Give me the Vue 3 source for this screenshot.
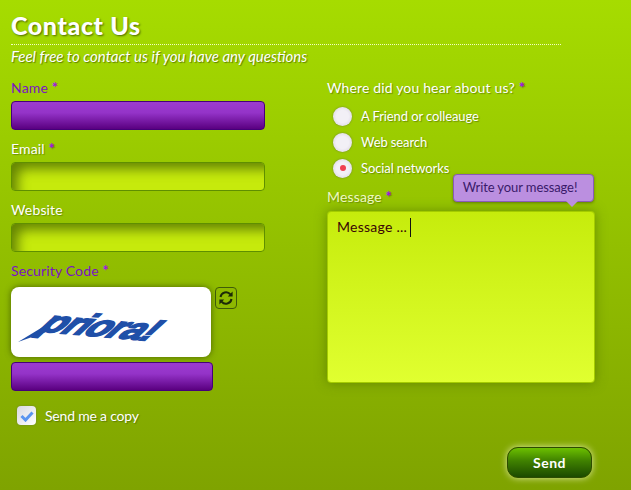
<script setup>
const sources = [
  { label: 'A Friend or colleauge', checked: false },
  { label: 'Web search', checked: false },
  { label: 'Social networks', checked: true },
]
</script>

<template>
  <div class="page">
    <h1 class="title">Contact Us</h1>
    <p class="intro">Feel free to contact us if you have any questions</p>

    <div class="columns">
      <div class="col-left">
        <div class="label label--error">Name <span class="req">*</span></div>
        <div class="field field--error"></div>

        <div class="label">Email <span class="req">*</span></div>
        <div class="field"></div>

        <div class="label">Website</div>
        <div class="field"></div>

        <div class="label label--error">Security Code <span class="req">*</span></div>
        <div class="captcha-row">
          <div class="captcha">
            <svg width="200" height="70" viewBox="0 0 200 70">
              <path d="M7 55 L40 35 L38 44 Z" fill="#1f4fa8" />
              <text class="captcha-text" transform="translate(25 44) rotate(5) skewX(-42) scale(1.42 1.15)">priora!</text>
            </svg>
          </div>
          <div class="refresh">
            <svg width="16" height="16" viewBox="0 0 16 16" fill="none" stroke="#1c2a08" stroke-width="2">
              <path d="M2.5 7 A5.6 5.6 0 0 1 12.4 4.4" />
              <path d="M13.5 9 A5.6 5.6 0 0 1 3.6 11.6" />
              <path d="M14.6 1.6 V6.4 H9.8 Z" fill="#1c2a08" stroke="none" />
              <path d="M1.4 14.4 V9.6 H6.2 Z" fill="#1c2a08" stroke="none" />
            </svg>
          </div>
        </div>
        <div class="field field--error field--code"></div>

        <div class="copy">
          <span class="checkbox">
            <svg width="14" height="12" viewBox="0 0 14 12">
              <path d="M1.5 6 L5.5 10 L12.5 2.5" fill="none" stroke="#5a94f0" stroke-width="3" />
            </svg>
          </span>
          <span class="copy-text">Send me a copy</span>
        </div>
      </div>

      <div class="col-right">
        <div class="label">Where did you hear about us? <span class="req">*</span></div>
        <div class="radios">
          <div v-for="item in sources" :key="item.label" class="radio-row">
            <span class="radio"><span v-if="item.checked" class="radio-dot"></span></span>
            <span class="radio-text">{{ item.label }}</span>
          </div>
        </div>

        <div class="message-wrap">
          <div class="label label--message">Message <span class="req">*</span></div>
          <div class="tip">Write your message!</div>
          <div class="message">Message ...<span class="caret"></span></div>
        </div>
      </div>
    </div>

    <div class="actions">
      <button type="button" class="send">Send</button>
    </div>
  </div>
</template>

<style>
html, body { margin: 0; padding: 0; }
</style>

<style scoped>
.page {
  width: 631px;
  height: 490px;
  box-sizing: border-box;
  padding: 11px 0 0 11px;
  overflow: hidden;
  background: linear-gradient(180deg, #a6dc00 0%, #7fa300 100%);
  font-family: "Lato", "Open Sans", sans-serif;
  color: #fff;
}
.title {
  width: 550px;
  height: 34px;
  margin: 0;
  box-sizing: border-box;
  border-bottom: 1px dotted #f2ffc0;
  font-size: 25px;
  line-height: 28px;
  font-weight: 900;
  letter-spacing: 0.6px;
  text-shadow: 1px 1px 2px #4d6a00;
}
.intro {
  height: 22px;
  margin: 0;
  font-size: 15px;
  line-height: 22px;
  font-style: italic;
  text-shadow: 1px 1px 1px #5e7f00;
}
.columns {
  display: flex;
  margin-top: 12px;
}
.col-left { width: 316px; }
.col-right { width: 268px; }
.label {
  height: 19px;
  margin-bottom: 3px;
  font-size: 14px;
  line-height: 17px;
  letter-spacing: 0.15px;
  text-shadow: 1px 1px 1px #6d9000;
}
.label--error {
  color: #7a12c4;
  text-shadow: none;
}
.label--message {
  margin-bottom: 4px;
  color: #eef8c0;
}
.req {
  color: #a010e8;
  font-size: 15px;
  font-weight: 700;
}
.field {
  width: 254px;
  height: 29px;
  margin-bottom: 10px;
  box-sizing: border-box;
  border: 1px solid #5f8f00;
  border-radius: 4px;
  background: #c6ea0c;
  box-shadow: inset 10px 10px 12px -4px rgba(70, 100, 0, 0.75);
}
.field--error {
  border-color: #45007a;
  background: linear-gradient(180deg, #9c3ccf 0%, #9433c8 40%, #5a0080 100%);
  box-shadow: none;
}
.field--code {
  width: 202px;
  margin-bottom: 0;
}
.captcha-row {
  display: flex;
  gap: 4px;
  height: 70px;
  margin: 6px 0 5px;
}
.captcha {
  width: 200px;
  height: 70px;
  background: #fff;
  border-radius: 8px;
  box-shadow: 0 0 6px rgba(60, 80, 0, 0.8);
}
.captcha-text {
  font-family: "Liberation Sans", sans-serif;
  font-size: 27px;
  font-weight: 700;
  letter-spacing: -1px;
  fill: #1f4fa8;
  stroke: #1f4fa8;
  stroke-width: 1.4px;
}
.refresh {
  display: flex;
  align-items: center;
  justify-content: center;
  width: 22px;
  height: 22px;
  box-sizing: border-box;
  border: 1px solid #3f5c08;
  border-radius: 4px;
}
.copy {
  display: flex;
  align-items: center;
  gap: 9px;
  margin: 15px 0 0 6px;
}
.checkbox {
  display: flex;
  align-items: center;
  justify-content: center;
  width: 19px;
  height: 19px;
  border-radius: 4px;
  background: linear-gradient(135deg, #d8d8e2, #fff);
  box-shadow: 0 0 2px #6a7a40;
}
.copy-text {
  font-size: 14px;
  letter-spacing: -0.2px;
  text-shadow: 1px 1px 1px #5e7f00;
}
.radios {
  display: flex;
  flex-direction: column;
  gap: 6px;
  margin: 8px 0 0 6px;
}
.radio-row {
  display: flex;
  align-items: center;
  gap: 9px;
  height: 20px;
}
.radio {
  display: flex;
  align-items: center;
  justify-content: center;
  width: 19px;
  height: 19px;
  border-radius: 50%;
  background: radial-gradient(circle at 50% 50%, #f2f0f6 45%, #d4cde0 100%);
  box-shadow: 0 0 2px #6a7a40;
}
.radio-dot {
  width: 6px;
  height: 6px;
  border-radius: 50%;
  background: #f04050;
}
.radio-text {
  font-size: 13px;
  letter-spacing: -0.1px;
  text-shadow: 1px 1px 1px #6d9000;
}
.message-wrap {
  position: relative;
  margin-top: 10px;
}
.message {
  width: 268px;
  height: 172px;
  box-sizing: border-box;
  padding: 6px 9px;
  border: 1px solid #a4cc00;
  border-radius: 4px;
  background: linear-gradient(180deg, #c6ec0c 0%, #e0ff30 100%);
  box-shadow: 0 0 12px rgba(70, 100, 0, 0.55);
  font-size: 14px;
  line-height: 17px;
  letter-spacing: 0.25px;
  color: #3a0505;
}
.caret {
  display: inline-block;
  width: 1px;
  height: 19px;
  margin-left: 3px;
  vertical-align: -5px;
  background: #111;
}
.tip {
  position: absolute;
  top: -14px;
  right: 1px;
  width: 141px;
  height: 28px;
  box-sizing: border-box;
  padding-right: 7px;
  border: 1px solid #8a5ab8;
  border-radius: 4px;
  background: #bb8fe0;
  box-shadow: 0 1px 3px rgba(60, 80, 0, 0.6);
  color: #3a1a6a;
  font-size: 13px;
  line-height: 25px;
  letter-spacing: -0.1px;
  text-align: center;
}
.tip::after {
  content: "";
  position: absolute;
  left: 112px;
  bottom: -6px;
  border: 6px solid transparent;
  border-bottom: 0;
  border-top-color: #bb8fe0;
}
.actions {
  position: absolute;
  top: 447px;
  left: 507px;
}
.send {
  width: 85px;
  height: 31px;
  padding: 0;
  border: 1px solid #2c4c00;
  border-radius: 11px;
  background: linear-gradient(180deg, #6cc000 0%, #3f8000 45%, #1c4a00 100%);
  box-shadow: 0 0 7px rgba(255, 255, 220, 0.75);
  color: #fff;
  font-family: "Lato", "Open Sans", sans-serif;
  font-size: 14px;
  font-weight: 700;
  letter-spacing: 0.5px;
}
</style>
